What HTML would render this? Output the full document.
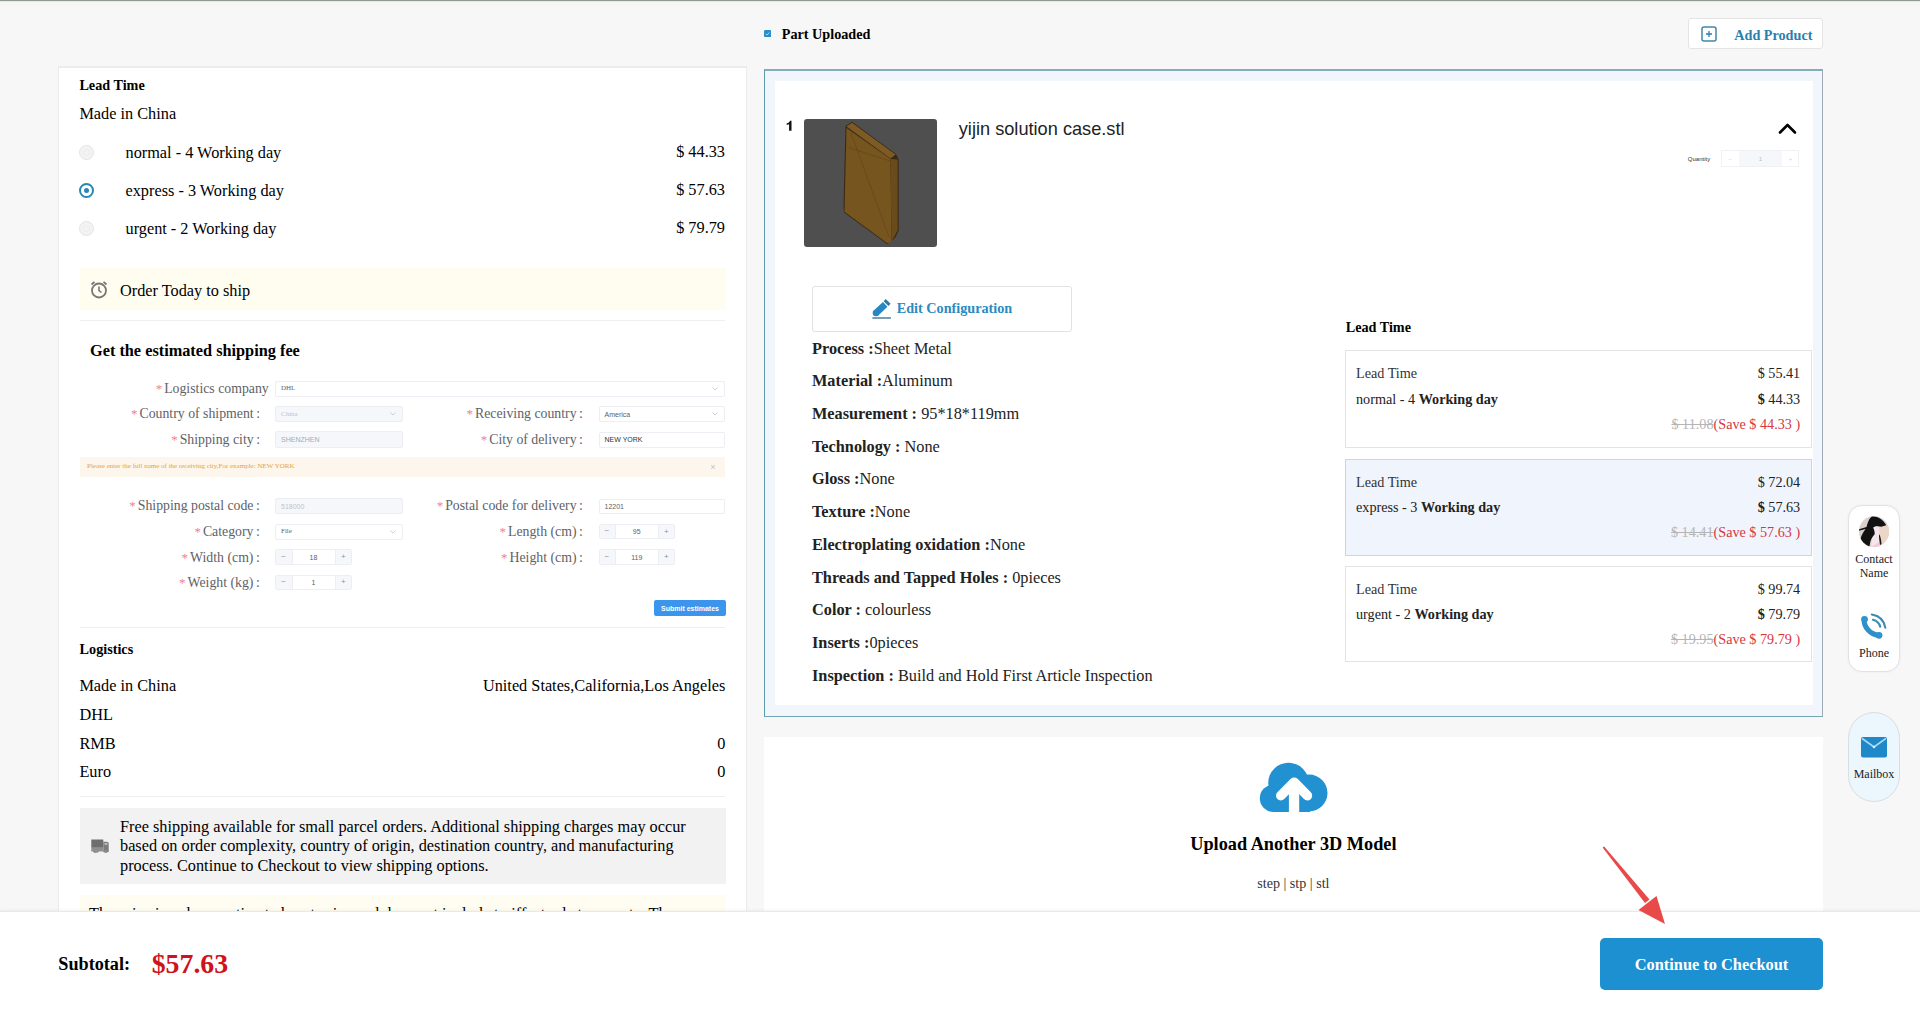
<!DOCTYPE html>
<html><head><meta charset="utf-8"><title>Checkout</title>
<style>
html,body{margin:0;padding:0;}
body{width:1920px;height:1013px;position:relative;overflow:hidden;background:#f7f7f7;font-family:'Liberation Serif', serif;}
.t{position:absolute;white-space:nowrap;}
.b{position:absolute;}
</style></head><body>
<div class="b" style="left:0px;top:0px;width:1920px;height:1px;background:#8e9a90"></div>
<div class="b" style="left:0px;top:1px;width:1920px;height:1px;background:#e4ebe4"></div>
<div class="b" style="left:0px;top:2px;width:1920px;height:4px;background:#f3f6f3"></div>
<svg class="b" style="left:764px;top:30.2px" width="7.2" height="7.2" viewBox="0 0 8 8"><rect x="0" y="0" width="8" height="8" rx="1.5" fill="#2a8fc9"/><path d="M2 4.2 L3.4 5.5 L6 2.8" stroke="#bfe3f7" stroke-width="1" fill="none"/></svg>
<div class="t" style="left:781.75px;top:27.00px;font-family:'Liberation Serif', serif;font-size:14.2px;line-height:14.2px;font-weight:bold;color:#000;">Part Uploaded</div>
<div class="b" style="left:1688px;top:18px;width:135px;height:30.5px;background:#fff;border:1px solid #e4e4e4;border-radius:3px;box-sizing:border-box"></div>
<svg class="b" style="left:1701px;top:26px" width="16" height="16" viewBox="0 0 16 16"><rect x="1" y="1" width="14" height="14" rx="2" fill="none" stroke="#3f88ad" stroke-width="1.5"/><path d="M8 5V11M5 8H11" stroke="#2f7ea8" stroke-width="1.3"/></svg>
<div class="t" style="left:1734.25px;top:28.00px;font-family:'Liberation Serif', serif;font-size:14.2px;line-height:14.2px;font-weight:bold;color:#2a7fae;">Add Product</div>
<div class="b" style="left:58px;top:66px;width:689px;height:947px;background:#fff;border:1px solid #ebebeb;border-top:2px solid #ececec;box-sizing:border-box"></div>
<div class="t" style="left:79.40px;top:78.00px;font-family:'Liberation Serif', serif;font-size:14.2px;line-height:14.2px;font-weight:bold;color:#000;">Lead Time</div>
<div class="t" style="left:79.40px;top:106.00px;font-family:'Liberation Serif', serif;font-size:16.3px;line-height:16.3px;font-weight:normal;color:#000;">Made in China</div>
<div class="b" style="left:79.25px;top:145.0px;width:15px;height:15px;border-radius:50%;box-sizing:border-box;border:1.5px solid #e4e4e4;background:#f3f3f3"><div style="position:absolute;left:2.5px;top:2.5px;width:7px;height:7px;border-radius:50%;border:1px solid #ececec;box-sizing:border-box"></div></div>
<div class="t" style="left:125.50px;top:145.00px;font-family:'Liberation Serif', serif;font-size:16.3px;line-height:16.3px;font-weight:normal;color:#000;">normal - 4 Working day</div>
<div class="t" style="right:1195.00px;top:144.00px;font-family:'Liberation Serif', serif;font-size:16.3px;line-height:16.3px;font-weight:normal;color:#000;">$ 44.33</div>
<div class="b" style="left:79.25px;top:183.25px;width:15px;height:15px;border-radius:50%;box-sizing:border-box;border:2.6px solid #2a86b3;background:#fff"><div style="position:absolute;left:2.4px;top:2.4px;width:5px;height:5px;border-radius:50%;background:#2a86b3"></div></div>
<div class="t" style="left:125.50px;top:183.00px;font-family:'Liberation Serif', serif;font-size:16.3px;line-height:16.3px;font-weight:normal;color:#000;">express - 3 Working day</div>
<div class="t" style="right:1195.00px;top:182.00px;font-family:'Liberation Serif', serif;font-size:16.3px;line-height:16.3px;font-weight:normal;color:#000;">$ 57.63</div>
<div class="b" style="left:79.25px;top:221.25px;width:15px;height:15px;border-radius:50%;box-sizing:border-box;border:1.5px solid #e4e4e4;background:#f3f3f3"><div style="position:absolute;left:2.5px;top:2.5px;width:7px;height:7px;border-radius:50%;border:1px solid #ececec;box-sizing:border-box"></div></div>
<div class="t" style="left:125.50px;top:221.00px;font-family:'Liberation Serif', serif;font-size:16.3px;line-height:16.3px;font-weight:normal;color:#000;">urgent - 2 Working day</div>
<div class="t" style="right:1195.00px;top:220.00px;font-family:'Liberation Serif', serif;font-size:16.3px;line-height:16.3px;font-weight:normal;color:#000;">$ 79.79</div>
<div class="b" style="left:80px;top:267.5px;width:646px;height:42.0px;background:#fffcf0"></div>
<svg class="b" style="left:89px;top:279px" width="20" height="20" viewBox="0 0 20 20"><circle cx="10" cy="11.5" r="7" fill="none" stroke="#777" stroke-width="1.8"/><path d="M10 7.5V11.5L12.5 13.5" fill="none" stroke="#777" stroke-width="1.6"/><path d="M2.5 5.5 L5.5 2.8 M17.5 5.5 L14.5 2.8" stroke="#777" stroke-width="1.8"/></svg>
<div class="t" style="left:120.00px;top:283.00px;font-family:'Liberation Serif', serif;font-size:16.3px;line-height:16.3px;font-weight:normal;color:#000;">Order Today to ship</div>
<div class="b" style="left:80px;top:320px;width:645px;height:1px;background:#efefef"></div>
<div class="t" style="left:90.00px;top:343.00px;font-family:'Liberation Serif', serif;font-size:16.3px;line-height:16.3px;font-weight:bold;color:#000;">Get the estimated shipping fee</div>
<div class="t" style="right:1651.25px;top:382.00px;font-family:'Liberation Serif', serif;font-size:13.8px;line-height:13.8px;font-weight:normal;color:#606266;"><span style="color:#ef7f8c;font-size:13px;margin-right:2px">*</span>Logistics company</div>
<div class="b" style="left:275px;top:380.5px;width:450px;height:16.0px;background:#fff;border:1px solid #eceef3;border-radius:2px;box-sizing:border-box"></div>
<div class="t" style="left:281.00px;top:385.00px;font-family:'Liberation Serif', serif;font-size:7px;line-height:7px;font-weight:normal;color:#606266;">DHL</div>
<svg class="b" style="left:712px;top:386.5px" width="6" height="4" viewBox="0 0 6 4"><path d="M0.5 0.5L3 3L5.5 0.5" fill="none" stroke="#c0c4cc" stroke-width="0.8"/></svg>
<div class="t" style="right:1660.00px;top:407.00px;font-family:'Liberation Serif', serif;font-size:13.8px;line-height:13.8px;font-weight:normal;color:#606266;"><span style="color:#ef7f8c;font-size:13px;margin-right:2px">*</span>Country of shipment<span style="margin-left:2.5px">:</span></div>
<div class="b" style="left:275px;top:406px;width:127.5px;height:16px;background:#f5f7fa;border:1px solid #eceef3;border-radius:2px;box-sizing:border-box"></div>
<div class="t" style="left:281.00px;top:411.00px;font-family:'Liberation Serif', serif;font-size:7px;line-height:7px;font-weight:normal;color:#c0c4cc;">China</div>
<svg class="b" style="left:389.5px;top:412.0px" width="6" height="4" viewBox="0 0 6 4"><path d="M0.5 0.5L3 3L5.5 0.5" fill="none" stroke="#c0c4cc" stroke-width="0.8"/></svg>
<div class="t" style="right:1337.10px;top:407.00px;font-family:'Liberation Serif', serif;font-size:13.8px;line-height:13.8px;font-weight:normal;color:#606266;"><span style="color:#ef7f8c;font-size:13px;margin-right:2px">*</span>Receiving country<span style="margin-left:2.5px">:</span></div>
<div class="b" style="left:598.5px;top:406px;width:126.5px;height:16px;background:#fff;border:1px solid #eceef3;border-radius:2px;box-sizing:border-box"></div>
<div class="t" style="left:604.50px;top:411.00px;font-family:'Liberation Sans', sans-serif;font-size:7px;line-height:7px;font-weight:normal;color:#606266;">America</div>
<svg class="b" style="left:712px;top:412.0px" width="6" height="4" viewBox="0 0 6 4"><path d="M0.5 0.5L3 3L5.5 0.5" fill="none" stroke="#c0c4cc" stroke-width="0.8"/></svg>
<div class="t" style="right:1660.00px;top:433.00px;font-family:'Liberation Serif', serif;font-size:13.8px;line-height:13.8px;font-weight:normal;color:#606266;"><span style="color:#ef7f8c;font-size:13px;margin-right:2px">*</span>Shipping city<span style="margin-left:2.5px">:</span></div>
<div class="b" style="left:275px;top:431px;width:127.5px;height:17px;background:#f5f7fa;border:1px solid #eceef3;border-radius:2px;box-sizing:border-box"></div>
<div class="t" style="left:281.00px;top:436.00px;font-family:'Liberation Sans', sans-serif;font-size:7px;line-height:7px;font-weight:normal;color:#a8abb2;">SHENZHEN</div>
<div class="t" style="right:1337.10px;top:433.00px;font-family:'Liberation Serif', serif;font-size:13.8px;line-height:13.8px;font-weight:normal;color:#606266;"><span style="color:#ef7f8c;font-size:13px;margin-right:2px">*</span>City of delivery<span style="margin-left:2.5px">:</span></div>
<div class="b" style="left:598.5px;top:431.5px;width:126.5px;height:16.0px;background:#fff;border:1px solid #eceef3;border-radius:2px;box-sizing:border-box"></div>
<div class="t" style="left:604.50px;top:436.00px;font-family:'Liberation Sans', sans-serif;font-size:7px;line-height:7px;font-weight:normal;color:#303133;">NEW YORK</div>
<div class="b" style="left:80px;top:457px;width:645px;height:20px;background:#fdf6ec"></div>
<div class="t" style="left:87.00px;top:463.00px;font-family:'Liberation Serif', serif;font-size:7px;line-height:7px;font-weight:normal;color:#e6a23c;">Please enter the full name of the receiving city,For example: NEW YORK</div>
<div class="t" style="left:213.00px;width:1000px;text-align:center;top:463.00px;font-family:'Liberation Sans', sans-serif;font-size:9px;line-height:9px;font-weight:normal;color:#c0c4cc;">×</div>
<div class="t" style="right:1660.20px;top:499.00px;font-family:'Liberation Serif', serif;font-size:13.8px;line-height:13.8px;font-weight:normal;color:#606266;"><span style="color:#ef7f8c;font-size:13px;margin-right:2px">*</span>Shipping postal code<span style="margin-left:2.5px">:</span></div>
<div class="b" style="left:275px;top:498.3px;width:127.5px;height:15.449999999999989px;background:#f5f7fa;border:1px solid #eceef3;border-radius:2px;box-sizing:border-box"></div>
<div class="t" style="left:281.00px;top:503.00px;font-family:'Liberation Sans', sans-serif;font-size:7px;line-height:7px;font-weight:normal;color:#c0c4cc;">518000</div>
<div class="t" style="right:1337.10px;top:499.00px;font-family:'Liberation Serif', serif;font-size:13.8px;line-height:13.8px;font-weight:normal;color:#606266;"><span style="color:#ef7f8c;font-size:13px;margin-right:2px">*</span>Postal code for delivery<span style="margin-left:2.5px">:</span></div>
<div class="b" style="left:598.5px;top:498.5px;width:126.5px;height:15.25px;background:#fff;border:1px solid #eceef3;border-radius:2px;box-sizing:border-box"></div>
<div class="t" style="left:604.50px;top:503.00px;font-family:'Liberation Sans', sans-serif;font-size:7px;line-height:7px;font-weight:normal;color:#606266;">12201</div>
<div class="t" style="right:1660.20px;top:525.00px;font-family:'Liberation Serif', serif;font-size:13.8px;line-height:13.8px;font-weight:normal;color:#606266;"><span style="color:#ef7f8c;font-size:13px;margin-right:2px">*</span>Category<span style="margin-left:2.5px">:</span></div>
<div class="b" style="left:275px;top:523.75px;width:127.5px;height:16.25px;background:#fff;border:1px solid #eceef3;border-radius:2px;box-sizing:border-box"></div>
<div class="t" style="left:281.00px;top:528.00px;font-family:'Liberation Serif', serif;font-size:7px;line-height:7px;font-weight:normal;color:#606266;">File</div>
<svg class="b" style="left:389.5px;top:529.875px" width="6" height="4" viewBox="0 0 6 4"><path d="M0.5 0.5L3 3L5.5 0.5" fill="none" stroke="#c0c4cc" stroke-width="0.8"/></svg>
<div class="t" style="right:1337.10px;top:525.00px;font-family:'Liberation Serif', serif;font-size:13.8px;line-height:13.8px;font-weight:normal;color:#606266;"><span style="color:#ef7f8c;font-size:13px;margin-right:2px">*</span>Length (cm)<span style="margin-left:2.5px">:</span></div>
<div class="b" style="left:598.5px;top:524.2px;width:76.10000000000002px;height:15.0px;background:#fff;border:1px solid #eceef3;border-radius:2px;box-sizing:border-box"></div>
<div class="b" style="left:615.2px;top:524.2px;width:1.0px;height:15.0px;background:#eceef3"></div>
<div class="b" style="left:658.3px;top:524.2px;width:1.0px;height:15.0px;background:#eceef3"></div>
<div class="b" style="left:599.5px;top:525.2px;width:15.700000000000045px;height:13.0px;background:#f5f7fa"></div>
<div class="b" style="left:659.3px;top:525.2px;width:14.300000000000068px;height:13.0px;background:#f5f7fa"></div>
<div class="t" style="left:106.85px;width:1000px;text-align:center;top:527.00px;font-family:'Liberation Sans', sans-serif;font-size:8px;line-height:8px;font-weight:normal;color:#909399;">−</div>
<div class="t" style="left:166.45px;width:1000px;text-align:center;top:528.00px;font-family:'Liberation Sans', sans-serif;font-size:8px;line-height:8px;font-weight:normal;color:#909399;">+</div>
<div class="t" style="left:136.75px;width:1000px;text-align:center;top:528.00px;font-family:'Liberation Sans', sans-serif;font-size:7px;line-height:7px;font-weight:normal;color:#606266;">95</div>
<div class="t" style="right:1660.20px;top:551.00px;font-family:'Liberation Serif', serif;font-size:13.8px;line-height:13.8px;font-weight:normal;color:#606266;"><span style="color:#ef7f8c;font-size:13px;margin-right:2px">*</span>Width (cm)<span style="margin-left:2.5px">:</span></div>
<div class="b" style="left:275px;top:549.4px;width:76.89999999999998px;height:15.600000000000023px;background:#fff;border:1px solid #eceef3;border-radius:2px;box-sizing:border-box"></div>
<div class="b" style="left:292.1px;top:549.4px;width:1.0px;height:15.600000000000023px;background:#eceef3"></div>
<div class="b" style="left:334.8px;top:549.4px;width:1.0px;height:15.600000000000023px;background:#eceef3"></div>
<div class="b" style="left:276px;top:550.4px;width:16.100000000000023px;height:13.600000000000023px;background:#f5f7fa"></div>
<div class="b" style="left:335.8px;top:550.4px;width:15.099999999999966px;height:13.600000000000023px;background:#f5f7fa"></div>
<div class="t" style="left:-216.45px;width:1000px;text-align:center;top:553.00px;font-family:'Liberation Sans', sans-serif;font-size:8px;line-height:8px;font-weight:normal;color:#909399;">−</div>
<div class="t" style="left:-156.65px;width:1000px;text-align:center;top:553.00px;font-family:'Liberation Sans', sans-serif;font-size:8px;line-height:8px;font-weight:normal;color:#909399;">+</div>
<div class="t" style="left:-186.55px;width:1000px;text-align:center;top:554.00px;font-family:'Liberation Sans', sans-serif;font-size:7px;line-height:7px;font-weight:normal;color:#606266;">18</div>
<div class="t" style="right:1337.10px;top:551.00px;font-family:'Liberation Serif', serif;font-size:13.8px;line-height:13.8px;font-weight:normal;color:#606266;"><span style="color:#ef7f8c;font-size:13px;margin-right:2px">*</span>Height (cm)<span style="margin-left:2.5px">:</span></div>
<div class="b" style="left:598.5px;top:549.2px;width:76.10000000000002px;height:16.0px;background:#fff;border:1px solid #eceef3;border-radius:2px;box-sizing:border-box"></div>
<div class="b" style="left:615.2px;top:549.2px;width:1.0px;height:16.0px;background:#eceef3"></div>
<div class="b" style="left:658.3px;top:549.2px;width:1.0px;height:16.0px;background:#eceef3"></div>
<div class="b" style="left:599.5px;top:550.2px;width:15.700000000000045px;height:14.0px;background:#f5f7fa"></div>
<div class="b" style="left:659.3px;top:550.2px;width:14.300000000000068px;height:14.0px;background:#f5f7fa"></div>
<div class="t" style="left:106.85px;width:1000px;text-align:center;top:553.00px;font-family:'Liberation Sans', sans-serif;font-size:8px;line-height:8px;font-weight:normal;color:#909399;">−</div>
<div class="t" style="left:166.45px;width:1000px;text-align:center;top:553.00px;font-family:'Liberation Sans', sans-serif;font-size:8px;line-height:8px;font-weight:normal;color:#909399;">+</div>
<div class="t" style="left:136.75px;width:1000px;text-align:center;top:554.00px;font-family:'Liberation Sans', sans-serif;font-size:7px;line-height:7px;font-weight:normal;color:#606266;">119</div>
<div class="t" style="right:1660.20px;top:576.00px;font-family:'Liberation Serif', serif;font-size:13.8px;line-height:13.8px;font-weight:normal;color:#606266;"><span style="color:#ef7f8c;font-size:13px;margin-right:2px">*</span>Weight (kg)<span style="margin-left:2.5px">:</span></div>
<div class="b" style="left:275px;top:574.8px;width:76.89999999999998px;height:15.600000000000023px;background:#fff;border:1px solid #eceef3;border-radius:2px;box-sizing:border-box"></div>
<div class="b" style="left:292.1px;top:574.8px;width:1.0px;height:15.600000000000023px;background:#eceef3"></div>
<div class="b" style="left:334.8px;top:574.8px;width:1.0px;height:15.600000000000023px;background:#eceef3"></div>
<div class="b" style="left:276px;top:575.8px;width:16.100000000000023px;height:13.600000000000023px;background:#f5f7fa"></div>
<div class="b" style="left:335.8px;top:575.8px;width:15.099999999999966px;height:13.600000000000023px;background:#f5f7fa"></div>
<div class="t" style="left:-216.45px;width:1000px;text-align:center;top:578.00px;font-family:'Liberation Sans', sans-serif;font-size:8px;line-height:8px;font-weight:normal;color:#909399;">−</div>
<div class="t" style="left:-156.65px;width:1000px;text-align:center;top:578.00px;font-family:'Liberation Sans', sans-serif;font-size:8px;line-height:8px;font-weight:normal;color:#909399;">+</div>
<div class="t" style="left:-186.55px;width:1000px;text-align:center;top:579.00px;font-family:'Liberation Sans', sans-serif;font-size:7px;line-height:7px;font-weight:normal;color:#606266;">1</div>
<div class="b" style="left:654px;top:600px;width:72px;height:16px;background:#3b95ec;border-radius:2px"></div>
<div class="t" style="left:190.00px;width:1000px;text-align:center;top:605.00px;font-family:'Liberation Sans', sans-serif;font-size:7px;line-height:7px;font-weight:bold;color:#fff;">Submit estimates</div>
<div class="b" style="left:80px;top:627px;width:645px;height:1px;background:#efefef"></div>
<div class="t" style="left:79.60px;top:642.00px;font-family:'Liberation Serif', serif;font-size:14.2px;line-height:14.2px;font-weight:bold;color:#000;">Logistics</div>
<div class="t" style="left:79.40px;top:678.00px;font-family:'Liberation Serif', serif;font-size:16.3px;line-height:16.3px;font-weight:normal;color:#000;">Made in China</div>
<div class="t" style="right:1194.70px;top:678.00px;font-family:'Liberation Serif', serif;font-size:16.3px;line-height:16.3px;font-weight:normal;color:#000;">United States,California,Los Angeles</div>
<div class="t" style="left:79.40px;top:707.00px;font-family:'Liberation Serif', serif;font-size:16.3px;line-height:16.3px;font-weight:normal;color:#000;">DHL</div>
<div class="t" style="left:79.40px;top:736.00px;font-family:'Liberation Serif', serif;font-size:16.3px;line-height:16.3px;font-weight:normal;color:#000;">RMB</div>
<div class="t" style="right:1194.70px;top:736.00px;font-family:'Liberation Serif', serif;font-size:16.3px;line-height:16.3px;font-weight:normal;color:#000;">0</div>
<div class="t" style="left:79.40px;top:764.00px;font-family:'Liberation Serif', serif;font-size:16.3px;line-height:16.3px;font-weight:normal;color:#000;">Euro</div>
<div class="t" style="right:1194.70px;top:764.00px;font-family:'Liberation Serif', serif;font-size:16.3px;line-height:16.3px;font-weight:normal;color:#000;">0</div>
<div class="b" style="left:80px;top:796px;width:645px;height:1px;background:#efefef"></div>
<div class="b" style="left:79.5px;top:807.5px;width:646.0px;height:76.5px;background:#f2f2f2"></div>
<svg class="b" style="left:91px;top:839px" width="18" height="15" viewBox="0 0 18 15"><rect x="0.3" y="0.5" width="12" height="8.3" fill="#6e6e6e"/><path d="M12.3 2.7 H16 Q17.7 2.7 17.7 4.5 V12.5 Q17.7 13.2 17 13.2 H12.3 Z" fill="#7c7c7c"/><rect x="13.5" y="4" width="3" height="1.8" fill="#bdbdbd"/><path d="M0.3 8.8 H12.3 V12.5 H8 Q6.5 14.2 5 13.5 Q3.5 14.2 2 12.5 H0.3 Z" fill="#8f8f8f"/><circle cx="4" cy="12.3" r="1.6" fill="#8f8f8f"/><circle cx="14.8" cy="12.6" r="1.5" fill="#8f8f8f"/></svg>
<div class="t" style="left:120.00px;top:819.00px;font-family:'Liberation Serif', serif;font-size:16.3px;line-height:16.3px;font-weight:normal;color:#000;">Free shipping available for small parcel orders. Additional shipping charges may occur</div>
<div class="t" style="left:120.00px;top:838.00px;font-family:'Liberation Serif', serif;font-size:16.3px;line-height:16.3px;font-weight:normal;color:#000;">based on order complexity, country of origin, destination country, and manufacturing</div>
<div class="t" style="left:120.00px;top:858.00px;font-family:'Liberation Serif', serif;font-size:16.3px;line-height:16.3px;font-weight:normal;color:#000;">process. Continue to Checkout to view shipping options.</div>
<div class="b" style="left:79.5px;top:895px;width:646.0px;height:118px;background:#fffcf2"></div>
<div class="t" style="left:89.00px;top:906.00px;font-family:'Liberation Serif', serif;font-size:16.3px;line-height:16.3px;font-weight:normal;color:#000;">The price is only an estimated cost price and does not include tariffs, trade terms, etc. The</div>
<div class="b" style="left:764px;top:69px;width:1059px;height:647.5px;background:#f1f5fc;border:1px solid #74a6b6;border-top:2px solid #86acb5;border-left-color:#5b9cad;border-right-color:#9eaab8;box-sizing:border-box"></div>
<div class="b" style="left:775px;top:81px;width:1037.5px;height:623.5px;background:#fff"></div>
<svg class="b" style="left:785px;top:119px" width="9" height="13" viewBox="0 0 9 13"><path d="M6.5 1.7 L6.5 11.8 L4.1 11.8 L4.1 5.3 L1.7 6.1 L1.7 4.4 C3.6 3.9 4.6 3 4.9 1.7 Z" fill="#111"/></svg>
<div class="b" style="left:804.25px;top:119.25px;width:132.75px;height:127.5px;background:#4f4f4f;border-radius:3px"></div>
<svg class="b" style="left:804.3px;top:119px" width="133" height="128" viewBox="0 0 133 128"><path d="M41.5 7 L48 2.7 L92 35 L94.6 40 L94.6 112 L91 119 L83 125 L40 93.5 L39.5 88 Z" fill="#3a2a14"/><path d="M42.5 9 L86.5 40 L87.5 123.2 L83 124 L40.5 92.8 Z" fill="#77551f"/><path d="M86.5 40 L93.6 40.5 L93.6 111.5 L87.5 122.5 Z" fill="#6a4b1c"/><path d="M42.5 7.5 L48 3.8 L91.5 35.5 L86.5 39.5 Z" fill="#7e5b25"/><path d="M47 14 L85 118 M43 28 L86 42" stroke="#5e431a" stroke-width="0.6" fill="none"/></svg>
<div class="t" style="left:958.75px;top:120.00px;font-family:'Liberation Sans', sans-serif;font-size:18.2px;line-height:18.2px;font-weight:normal;color:#222;">yijin solution case.stl</div>
<svg class="b" style="left:1778px;top:122px" width="19" height="13" viewBox="0 0 19 13"><path d="M2 10.5 L9.5 3 L17 10.5" fill="none" stroke="#000" stroke-width="2.6" stroke-linecap="round" stroke-linejoin="round"/></svg>
<div class="t" style="left:1199.00px;width:1000px;text-align:center;top:156.00px;font-family:'Liberation Sans', sans-serif;font-size:6px;line-height:6px;font-weight:normal;color:#333;">Quantity</div>
<div class="b" style="left:1721px;top:150px;width:78px;height:16.5px;background:#fff;border:1px solid #f0f1f5;box-sizing:border-box"></div>
<div class="b" style="left:1739px;top:151px;width:43px;height:14.5px;background:#f6f7fb"></div>
<div class="t" style="left:1230.00px;width:1000px;text-align:center;top:156.00px;font-family:'Liberation Sans', sans-serif;font-size:6px;line-height:6px;font-weight:normal;color:#d5d5d5;">−</div>
<div class="t" style="left:1290.50px;width:1000px;text-align:center;top:156.00px;font-family:'Liberation Sans', sans-serif;font-size:6px;line-height:6px;font-weight:normal;color:#d5d5d5;">+</div>
<div class="t" style="left:1260.50px;width:1000px;text-align:center;top:156.00px;font-family:'Liberation Sans', sans-serif;font-size:6px;line-height:6px;font-weight:normal;color:#bbb;">1</div>
<div class="b" style="left:812px;top:285.5px;width:259.5px;height:46.5px;background:#fff;border:1px solid #e2e2e2;border-radius:3px;box-sizing:border-box"></div>
<svg class="b" style="left:866px;top:294px" width="34" height="30" viewBox="0 0 34 30"><path d="M12.25 21.41 L7.75 16.59 L16.95 7.99 L21.45 12.81 Z" fill="#2787c4"/><circle cx="10" cy="19" r="3.3" fill="#2787c4"/><path d="M18.7 6.1 L23.5 10.9" stroke="#2b7aa5" stroke-width="3"/><rect x="6.4" y="23.1" width="18.5" height="1.8" fill="#6a94ad"/></svg>
<div class="t" style="left:896.75px;top:301.00px;font-family:'Liberation Serif', serif;font-size:14.2px;line-height:14.2px;font-weight:bold;color:#2b8bc0;">Edit Configuration</div>
<div class="t" style="left:812.00px;top:341.00px;font-family:'Liberation Serif', serif;font-size:16.3px;line-height:16.3px;font-weight:normal;color:#222;"><b>Process :</b>Sheet Metal</div>
<div class="t" style="left:812.00px;top:373.00px;font-family:'Liberation Serif', serif;font-size:16.3px;line-height:16.3px;font-weight:normal;color:#222;"><b>Material :</b>Aluminum</div>
<div class="t" style="left:812.00px;top:406.00px;font-family:'Liberation Serif', serif;font-size:16.3px;line-height:16.3px;font-weight:normal;color:#222;"><b>Measurement : </b>95*18*119mm</div>
<div class="t" style="left:812.00px;top:439.00px;font-family:'Liberation Serif', serif;font-size:16.3px;line-height:16.3px;font-weight:normal;color:#222;"><b>Technology : </b>None</div>
<div class="t" style="left:812.00px;top:471.00px;font-family:'Liberation Serif', serif;font-size:16.3px;line-height:16.3px;font-weight:normal;color:#222;"><b>Gloss :</b>None</div>
<div class="t" style="left:812.00px;top:504.00px;font-family:'Liberation Serif', serif;font-size:16.3px;line-height:16.3px;font-weight:normal;color:#222;"><b>Texture :</b>None</div>
<div class="t" style="left:812.00px;top:537.00px;font-family:'Liberation Serif', serif;font-size:16.3px;line-height:16.3px;font-weight:normal;color:#222;"><b>Electroplating oxidation :</b>None</div>
<div class="t" style="left:812.00px;top:570.00px;font-family:'Liberation Serif', serif;font-size:16.3px;line-height:16.3px;font-weight:normal;color:#222;"><b>Threads and Tapped Holes : </b>0pieces</div>
<div class="t" style="left:812.00px;top:602.00px;font-family:'Liberation Serif', serif;font-size:16.3px;line-height:16.3px;font-weight:normal;color:#222;"><b>Color : </b>colourless</div>
<div class="t" style="left:812.00px;top:635.00px;font-family:'Liberation Serif', serif;font-size:16.3px;line-height:16.3px;font-weight:normal;color:#222;"><b>Inserts :</b>0pieces</div>
<div class="t" style="left:812.00px;top:668.00px;font-family:'Liberation Serif', serif;font-size:16.3px;line-height:16.3px;font-weight:normal;color:#222;"><b>Inspection : </b>Build and Hold First Article Inspection</div>
<div class="t" style="left:1345.70px;top:320.00px;font-family:'Liberation Serif', serif;font-size:14.2px;line-height:14.2px;font-weight:bold;color:#000;">Lead Time</div>
<div class="b" style="left:1345px;top:350px;width:467px;height:97.5px;background:#fff;border:1px solid #e3e3e3;box-sizing:border-box"></div>
<div class="t" style="left:1356.00px;top:366.00px;font-family:'Liberation Serif', serif;font-size:14.2px;line-height:14.2px;font-weight:normal;color:#333;">Lead Time</div>
<div class="t" style="left:1356.00px;top:392.00px;font-family:'Liberation Serif', serif;font-size:14.2px;line-height:14.2px;font-weight:normal;color:#222;">normal - 4 <b>Working day</b></div>
<div class="t" style="right:119.80px;top:366.00px;font-family:'Liberation Serif', serif;font-size:14.2px;line-height:14.2px;font-weight:normal;color:#222;">$ 55.41</div>
<div class="t" style="right:119.80px;top:392.00px;font-family:'Liberation Serif', serif;font-size:14.2px;line-height:14.2px;font-weight:normal;color:#222;"><b>$</b> 44.33</div>
<div class="t" style="right:119.80px;top:417.00px;font-family:'Liberation Serif', serif;font-size:14.2px;line-height:14.2px;font-weight:normal;color:#000;"><span style="color:#b5b5b5;text-decoration:line-through">$ 11.08</span><span style="color:#d9363e">(Save $ 44.33 )</span></div>
<div class="b" style="left:1345px;top:458.5px;width:467px;height:97.0px;background:#f0f4fc;border:1px solid #c9d6e6;box-sizing:border-box"></div>
<div class="t" style="left:1356.00px;top:475.00px;font-family:'Liberation Serif', serif;font-size:14.2px;line-height:14.2px;font-weight:normal;color:#333;">Lead Time</div>
<div class="t" style="left:1356.00px;top:500.00px;font-family:'Liberation Serif', serif;font-size:14.2px;line-height:14.2px;font-weight:normal;color:#222;">express - 3 <b>Working day</b></div>
<div class="t" style="right:119.80px;top:475.00px;font-family:'Liberation Serif', serif;font-size:14.2px;line-height:14.2px;font-weight:normal;color:#222;">$ 72.04</div>
<div class="t" style="right:119.80px;top:500.00px;font-family:'Liberation Serif', serif;font-size:14.2px;line-height:14.2px;font-weight:normal;color:#222;"><b>$</b> 57.63</div>
<div class="t" style="right:119.80px;top:525.00px;font-family:'Liberation Serif', serif;font-size:14.2px;line-height:14.2px;font-weight:normal;color:#000;"><span style="color:#b5b5b5;text-decoration:line-through">$ 14.41</span><span style="color:#d9363e">(Save $ 57.63 )</span></div>
<div class="b" style="left:1345px;top:566.3px;width:467px;height:96.20000000000005px;background:#fff;border:1px solid #e3e3e3;box-sizing:border-box"></div>
<div class="t" style="left:1356.00px;top:582.00px;font-family:'Liberation Serif', serif;font-size:14.2px;line-height:14.2px;font-weight:normal;color:#333;">Lead Time</div>
<div class="t" style="left:1356.00px;top:607.00px;font-family:'Liberation Serif', serif;font-size:14.2px;line-height:14.2px;font-weight:normal;color:#222;">urgent - 2 <b>Working day</b></div>
<div class="t" style="right:119.80px;top:582.00px;font-family:'Liberation Serif', serif;font-size:14.2px;line-height:14.2px;font-weight:normal;color:#222;">$ 99.74</div>
<div class="t" style="right:119.80px;top:607.00px;font-family:'Liberation Serif', serif;font-size:14.2px;line-height:14.2px;font-weight:normal;color:#222;"><b>$</b> 79.79</div>
<div class="t" style="right:119.80px;top:632.00px;font-family:'Liberation Serif', serif;font-size:14.2px;line-height:14.2px;font-weight:normal;color:#000;"><span style="color:#b5b5b5;text-decoration:line-through">$ 19.95</span><span style="color:#d9363e">(Save $ 79.79 )</span></div>
<div class="b" style="left:764px;top:737px;width:1059px;height:276px;background:#fff"></div>
<svg class="b" style="left:1259px;top:762px" width="70" height="53" viewBox="0 0 70 53"><g fill="#2191d1"><circle cx="14.5" cy="36.3" r="13.7"/><circle cx="29.5" cy="21" r="20.3"/><circle cx="50" cy="31" r="18.5"/><rect x="14" y="30" width="37" height="20"/></g><path d="M21.8 33.7 L35.2 20.2 L48.4 33.7" fill="none" stroke="#fff" stroke-width="9.6" stroke-linecap="round" stroke-linejoin="round"/><rect x="29.9" y="22" width="10.3" height="31" fill="#fff"/></svg>
<div class="t" style="left:1190.20px;top:835.00px;font-family:'Liberation Serif', serif;font-size:18.3px;line-height:18.3px;font-weight:bold;color:#000;">Upload Another 3D Model</div>
<div class="t" style="left:1257.30px;top:876.00px;font-family:'Liberation Serif', serif;font-size:14.1px;line-height:14.1px;font-weight:normal;color:#333;">step | stp | stl</div>
<div class="b" style="left:0px;top:911px;width:1920px;height:102px;background:#fff;border-top:1px solid #e9e9e9;box-sizing:border-box;box-shadow:0 -1px 3px rgba(0,0,0,0.05)"></div>
<div class="t" style="left:58.30px;top:955.00px;font-family:'Liberation Serif', serif;font-size:18.2px;line-height:18.2px;font-weight:bold;color:#000;">Subtotal:</div>
<div class="t" style="left:151.70px;top:950.00px;font-family:'Liberation Serif', serif;font-size:27.8px;line-height:27.8px;font-weight:bold;color:#d0121b;">$57.63</div>
<div class="b" style="left:1600px;top:937.7px;width:223px;height:52.299999999999955px;background:#1d90d2;border-radius:5px"></div>
<div class="t" style="left:1211.50px;width:1000px;text-align:center;top:957.00px;font-family:'Liberation Serif', serif;font-size:16.35px;line-height:16.35px;font-weight:bold;color:#fff;">Continue to Checkout</div>
<svg class="b" style="left:1595px;top:840px" width="80" height="90" viewBox="0 0 80 90"><path d="M7.6 7.4 L9.2 6.6 L54.5 59.5 L50 63 Z" fill="#e84a4a"/><path d="M70 84 L43.5 70 L61.5 56 Z" fill="#e84a4a"/></svg>
<div class="b" style="left:1848px;top:505px;width:52px;height:167px;background:#fff;border:1px solid #e2e2e2;border-radius:14px;box-sizing:border-box;box-shadow:0 0 3px rgba(0,0,0,0.05)"></div>
<svg class="b" style="left:1858.9px;top:516.4px" width="30" height="31" viewBox="0 0 30 31"><defs><clipPath id="avc"><ellipse cx="15" cy="15.5" rx="15" ry="15.5"/></clipPath></defs><g clip-path="url(#avc)"><rect width="30" height="31" fill="#d9d0cc"/><path d="M19 9 L30 9 L30 31 L19 31 Z" fill="#ecd6c8"/><path d="M14 11 L20 10.5 L21 31 L12 31 Z" fill="#f4e6ea"/><path d="M12 31 L22 31 L20 26 Z" fill="#f0cdd9"/><path d="M12.9 0.6 C18 0 24 3 27.2 9.2 L22.3 10.7 L17.1 9.9 L14.1 11.4 C15.5 14 16 17 15.6 18.2 C14 20 12.6 21.9 11.5 25 L10.3 31 L3 31 C1 27 0.5 23 1.7 21.9 C3 18 5 15 6.6 12.9 L0 14.8 L0 13.2 L7.5 11 C9 6 10.5 2 12.9 0.6 Z" fill="#121212"/><path d="M20 18 C21.5 20 22.3 24 22.5 28 L21 29 C20.5 25 19.8 21 20 18 Z" fill="#1a1a1a"/></g></svg>
<div class="t" style="left:1374.00px;width:1000px;text-align:center;top:553.00px;font-family:'Liberation Serif', serif;font-size:12px;line-height:12px;font-weight:normal;color:#222;">Contact</div>
<div class="t" style="left:1374.00px;width:1000px;text-align:center;top:567.00px;font-family:'Liberation Serif', serif;font-size:12px;line-height:12px;font-weight:normal;color:#222;">Name</div>
<svg class="b" style="left:1856px;top:608px" width="36" height="36" viewBox="0 0 36 36"><path d="M8.3 11.8 C7.5 18.5 14 26.5 22.8 27.4" stroke="#2f8fc8" stroke-width="5" stroke-linecap="round" fill="none"/><circle cx="8.5" cy="11.3" r="3.4" fill="#2f93cf"/><circle cx="23" cy="27.3" r="3.4" fill="#2f93cf"/><path d="M17 11.8 Q22.6 13.2 24.2 18.6 M15.8 6.5 Q27.3 8.3 29.3 19.6" stroke="#3d8db3" stroke-width="2.2" stroke-linecap="round" fill="none"/></svg>
<div class="t" style="left:1374.00px;width:1000px;text-align:center;top:647.00px;font-family:'Liberation Serif', serif;font-size:12px;line-height:12px;font-weight:normal;color:#222;">Phone</div>
<div class="b" style="left:1848px;top:712px;width:52px;height:90px;background:#ebf6fd;border:1.5px solid #d9dee3;border-radius:26px;box-sizing:border-box"></div>
<svg class="b" style="left:1861px;top:737px" width="26" height="21" viewBox="0 0 26 21"><rect x="0" y="0" width="26" height="20.5" rx="2" fill="#1e88c8"/><path d="M1.5 1.8 L13 10 L24.5 1.8" fill="none" stroke="#a8d8f5" stroke-width="1.7" stroke-linecap="round"/><circle cx="13" cy="10" r="1.3" fill="#d6effc"/></svg>
<div class="t" style="left:1374.00px;width:1000px;text-align:center;top:768.00px;font-family:'Liberation Serif', serif;font-size:12px;line-height:12px;font-weight:normal;color:#222;">Mailbox</div>
</body></html>
